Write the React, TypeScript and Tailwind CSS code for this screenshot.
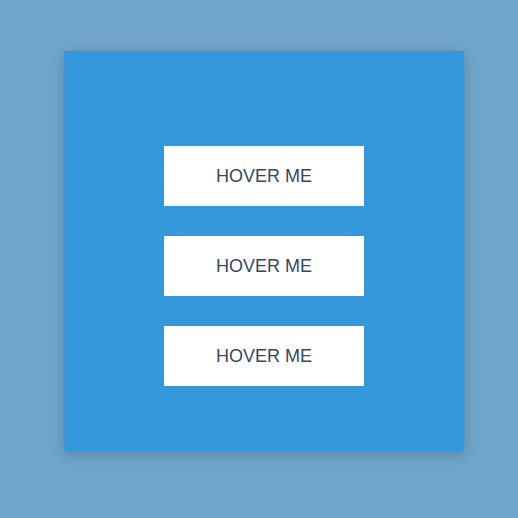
export default function App() {
  return (
    <div className="w-[518px] h-[518px] bg-[#70a4c8] pl-[64px] pt-[51px]">
      <div className="w-[400px] h-[400px] bg-[#3498db] shadow-[0_4px_12px_rgba(0,0,0,0.18)] flex flex-col items-center justify-center">
        {[0, 1, 2].map((i) => (
          <button
            key={i}
            className="mt-[30px] w-[200px] h-[60px] bg-white text-[#34495e] text-[18px] font-['Liberation_Sans',Arial,sans-serif]"
          >
            HOVER ME
          </button>
        ))}
      </div>
    </div>
  );
}
